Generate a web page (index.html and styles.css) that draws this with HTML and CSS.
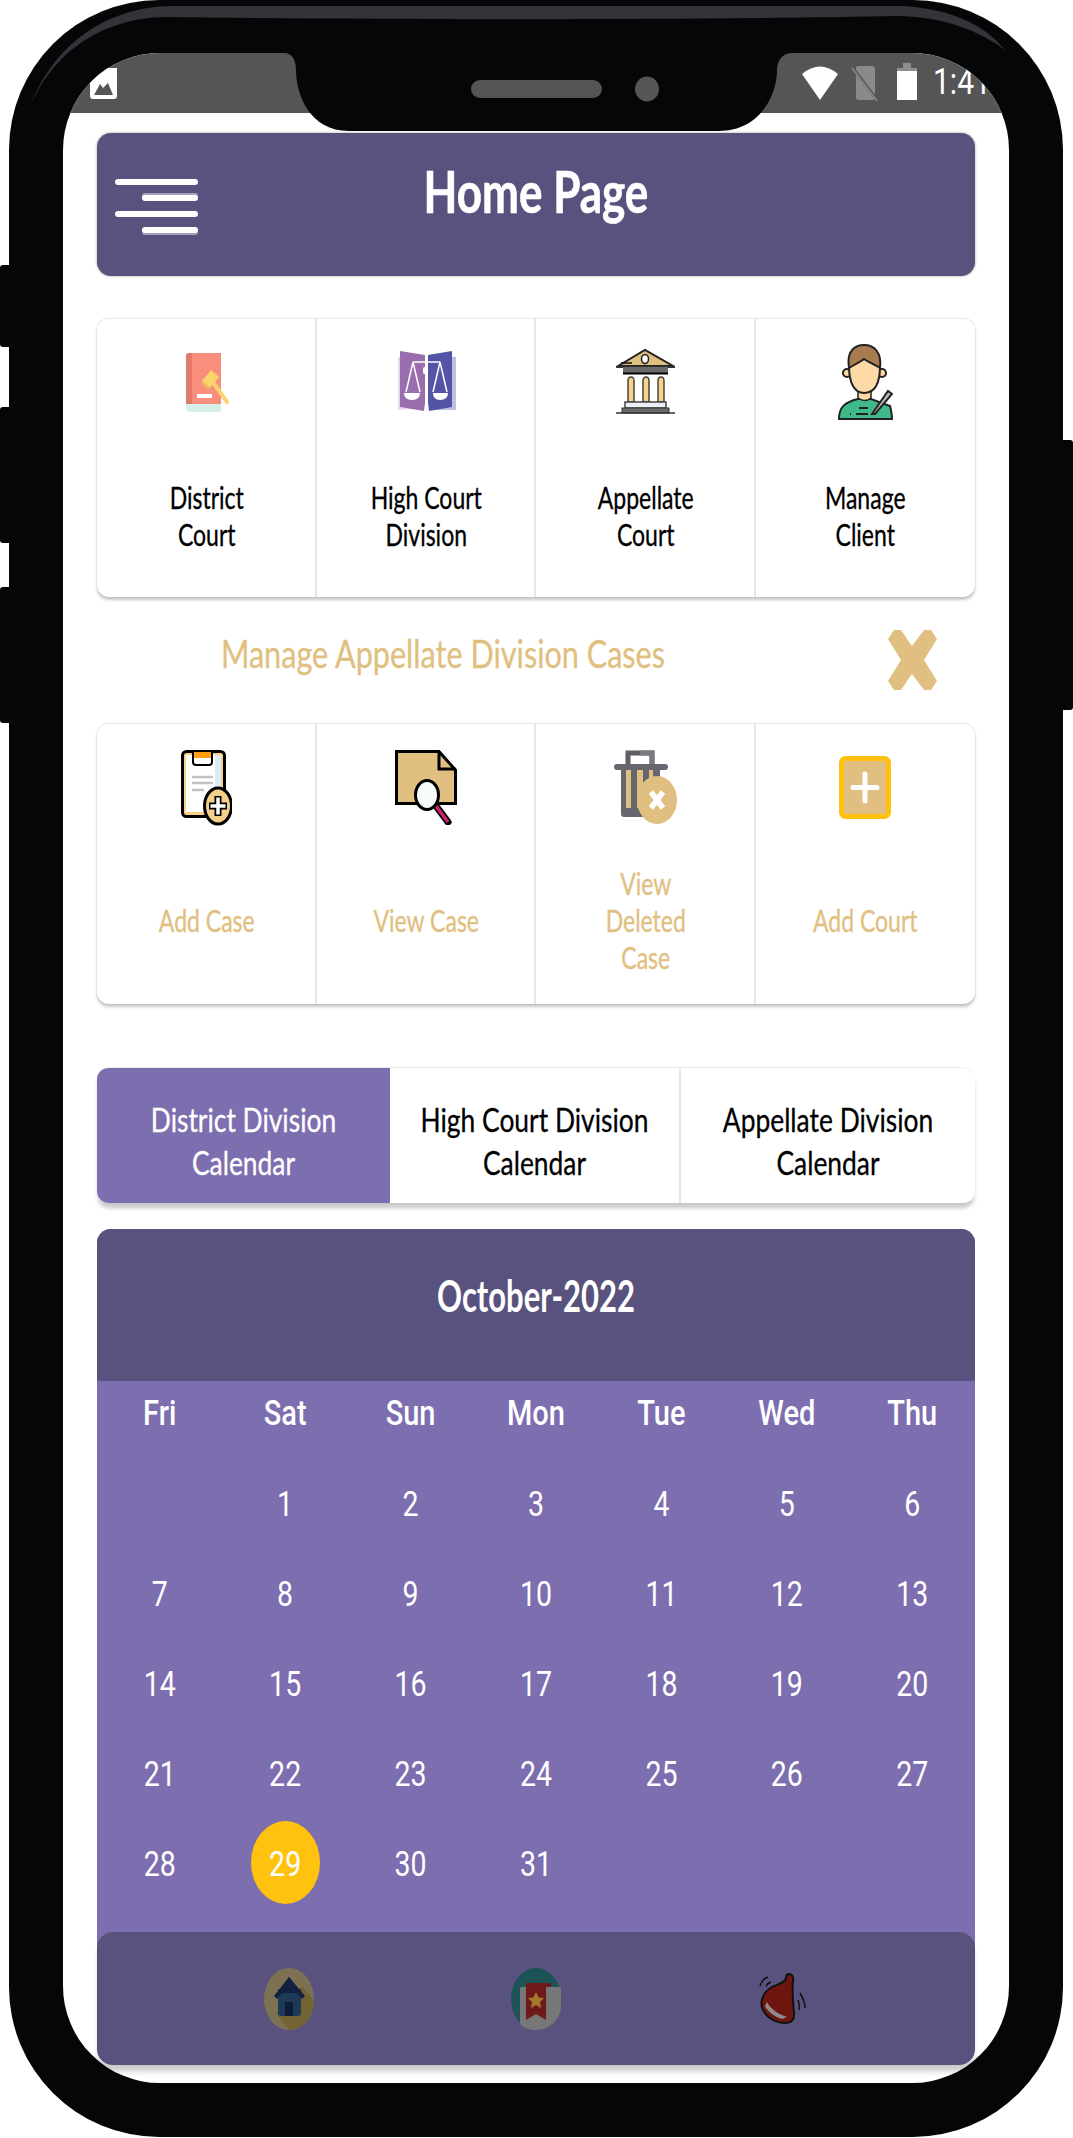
FILE: index.html
```html
<!DOCTYPE html>
<html lang="en">
<head>
<meta charset="utf-8">
<title>Home Page</title>
<link rel="stylesheet" href="styles.css">
</head>
<body>
<div class="side-keys left">
  <i class="key k1"></i><i class="key k2"></i><i class="key k3"></i>
</div>
<div class="phone">
  <svg class="sheen" viewBox="0 0 1054 120" aria-hidden="true"><path d="M20 110C41 55 91 18 156 17C391 20 691 20 891 16C941 17 976 35 996 50C976 25 941 8 891 6H161C91 8 41 50 20 110Z"/></svg>
  <svg class="notch" viewBox="280 50 520 90" aria-hidden="true">
    <path class="notch-body" d="M280 50H792V53C783 53 777 60 777 70C777 95 760 131 719 131H349C310 131 296 95 296 70C296 60 292 53 284 53Z"/>
    <rect class="notch-part" x="471" y="80" width="131" height="18" rx="9"/>
    <ellipse class="notch-part" cx="647" cy="89" rx="12" ry="12.5"/>
  </svg>
  <div class="screen">
    <div class="status">
      <svg class="st-img" viewBox="0 0 27 31"><path d="M0 0H27V28Q27 31 24 31H3Q0 31 0 28Z" fill="#fff"/><path d="M4 27L10 16L13 20L18 15L23 27Z" fill="#555"/></svg>
      <div class="st-right">
        <svg class="st-wifi" viewBox="0 0 36 35"><path d="M0 9Q18 -6 36 9L18 35Z" fill="#fff"/></svg>
        <svg class="st-sim" viewBox="0 0 28 36"><path d="M5 3Q5 1 7 1H21Q24 1 24 4V32Q24 35 21 35H8Q5 35 5 32Z" fill="#8a8a8a"/><path d="M1 2L26 35" stroke="#555" stroke-width="3"/><path d="M1 3L26 36" stroke="#8a8a8a" stroke-width="1.5"/></svg>
        <svg class="st-bat" viewBox="0 0 20 37"><path d="M6 0H14V5H20V12H0V5H6Z" fill="#8d8d8d"/><rect y="8" width="20" height="29" fill="#fff"/></svg>
        <span class="st-time">1:41</span>
      </div>
    </div>
    <main class="content">
      <header class="topbar">
        <div class="burger"><i></i><i class="short up"></i><i></i><i class="short down"></i></div>
        <h1 class="page-title"><span>Home Page</span></h1>
      </header>

      <section class="card grid4 first-card">
        <div class="cell">
          <svg class="ico ic-book" viewBox="0 0 44 59"><path d="M3 0H35V51H0V3Q0 0 3 0Z" fill="#f78f7c"/><path d="M3 0H6V51H0V3Q0 0 3 0Z" fill="#e07b6c"/><path d="M0 51H35V59H4Q0 59 0 55Z" fill="#d6efe9"/><rect x="11" y="41" width="15" height="4" fill="#fff"/><path d="M24 25L41 49" stroke="#fbd26e" stroke-width="4" stroke-linecap="round"/><path d="M16 28L25 17L33 24L24 35Z" fill="#f9d36c"/><path d="M16 28L24 35L22 37L15 30Z" fill="#f2b35e"/></svg>
          <div class="lbl"><span>District</span><span>Court</span></div>
        </div>
        <div class="cell">
          <svg class="ico ic-scale" viewBox="0 0 58 61"><path d="M0 7H4V58H20L0 60Z" fill="#e6d6ee"/><path d="M54 7H58V60H36V57H54Z" fill="#bcc2dc"/><path d="M2 1L27 5V53L26 61L2 57Z" fill="#9a6dae"/><path d="M54 1L30 5V53L31 61L54 57Z" fill="#5354a5"/><path d="M15 12H42M28 5V54M15 12L8 42M15 12L22 42M42 12L35 42M42 12L49 42" fill="none" stroke="#fff" stroke-width="1.5"/><path d="M6 43H22Q22 50 14 50Q6 50 6 43ZM35 43H50Q50 50 42 50Q35 50 35 43Z" fill="#fff"/><rect x="25" y="17" width="5" height="7" rx="2" fill="#fff"/></svg>
          <div class="lbl"><span>High Court</span><span>Division</span></div>
        </div>
        <div class="cell">
          <svg class="ico ic-court" viewBox="0 0 59 66"><path d="M2 18L29 2L57 18Z" fill="#e1bf80" stroke="#222" stroke-width="2"/><ellipse cx="29" cy="11" rx="3.5" ry="4.5" fill="#fff" stroke="#222" stroke-width="1.5"/><path d="M5 15H16" stroke="#111" stroke-width="1.5"/><path d="M0 19H59" stroke="#333" stroke-width="2"/><rect x="7" y="19" width="45" height="7" fill="#6a6a6a"/><path d="M7 25.500H52" stroke="#000" stroke-width="2"/><path d="M12 54V33Q12 29 15 29Q18 29 18 33V54ZM27 54V33Q27 29 30 29Q33 29 33 33V54ZM42 54V33Q42 29 45 29Q48 29 48 33V54Z" fill="#f9d187" stroke="#444" stroke-width="1.5"/><rect x="9" y="54" width="41" height="6" fill="#eef0f6" stroke="#444" stroke-width="1.500"/><rect x="6" y="60" width="47" height="5" fill="#6a6a6a" stroke="#333"/><path d="M0 65H59" stroke="#333" stroke-width="1.500"/></svg>
          <div class="lbl"><span>Appellate</span><span>Court</span></div>
        </div>
        <div class="cell">
          <svg class="ico ic-person" viewBox="0 0 55 76"><path d="M1 75C1 63 7 58 20 55H33L52 62C53 66 54 70 54 75Z" fill="#3fb98a" stroke="#222" stroke-width="2"/><path d="M20 46H33V54Q27 59 20 54Z" fill="#fdd9a6" stroke="#222" stroke-width="1.500"/><circle cx="9" cy="29" r="4" fill="#fdd9a6" stroke="#222" stroke-width="2"/><circle cx="44" cy="29" r="4" fill="#fdd9a6" stroke="#222" stroke-width="2"/><path d="M11 22C11 40 17 49 26 49C36 49 42 40 42 22C36 20 30 18 26 14C22 18 16 20 11 22Z" fill="#fdd9a6" stroke="#222" stroke-width="2"/><path d="M11 24C8 6 18 1 26 1C36 1 44 8 42 24C36 20 30 18 26 15C22 18 16 21 11 24Z" fill="#a97c50" stroke="#222" stroke-width="2"/><path d="M34 70L50 47L54 50L37 70Z" fill="#bbb" stroke="#222" stroke-width="2"/><path d="M21 64H30M12 70H13M18 70H30" stroke="#222" stroke-width="2"/></svg>
          <div class="lbl"><span>Manage</span><span>Client</span></div>
        </div>
      </section>

      <div class="manage-row">
        <h2 class="manage-title"><span>Manage Appellate Division Cases</span></h2>
        <svg class="close-x" viewBox="0 0 51 62" aria-label="Close"><path d="M7 1L14 1L25 17L37 1L44 1L50 10L37 31L50 52L44 61L37 61L25 45L14 61L7 61L1 52L14 31L1 10Z" fill="#e1bf80"/></svg>
      </div>

      <section class="card grid4 second-card">
        <div class="cell gold">
          <svg class="ico ic-clip" viewBox="0 0 51 76"><rect x="1.500" y="1.500" width="42" height="65" rx="4" fill="#f7cf85" stroke="#000" stroke-width="3"/><rect x="5" y="5" width="35" height="57" fill="#fff"/><rect x="34" y="5" width="6" height="57" fill="#d9eef2"/><path d="M12 1H31V12Q31 15 28 15H15Q12 15 12 12Z" fill="#fff" stroke="#000" stroke-width="2"/><rect x="13" y="2" width="17" height="6" fill="#ff9d0a"/><path d="M11 27H32M11 33H32M11 40H23" stroke="#c2c2c2" stroke-width="2.500"/><ellipse cx="37" cy="56" rx="13.500" ry="18" fill="#f5d088" stroke="#000" stroke-width="3"/><path d="M37 46V66M28 56H46" stroke="#000" stroke-width="7"/><path d="M37 47.500V64.500M29.500 56H44.500" stroke="#fff" stroke-width="3.500"/></svg>
          <div class="lbl"><span>Add Case</span></div>
        </div>
        <div class="cell gold">
          <svg class="ico ic-file" viewBox="0 0 62 75"><path d="M1.500 1.500H44L60.500 20V53.500H1.500Z" fill="#e1bf80" stroke="#000" stroke-width="3"/><path d="M44 1.500V19H60.500" fill="none" stroke="#000" stroke-width="3"/><path d="M41 56L53 72" stroke="#000" stroke-width="7" stroke-linecap="round"/><path d="M41 56L53 72" stroke="#c9256d" stroke-width="3.500"/><ellipse cx="32" cy="45" rx="11.500" ry="14.500" fill="#f8fbfb" stroke="#000" stroke-width="3"/></svg>
          <div class="lbl"><span>View Case</span></div>
        </div>
        <div class="cell gold">
          <svg class="ico ic-trash" viewBox="0 0 63 76"><path d="M14 16V3H38V16" fill="none" stroke="#5f5f67" stroke-width="5"/><path d="M26 3H38V16" fill="none" stroke="#7a7a82" stroke-width="5"/><rect x="7" y="18" width="39" height="49" rx="3" fill="#66666e"/><path d="M12 20H17V58H12ZM23 20H29V58H23ZM35 20H39V58H35Z" fill="#e1bf80"/><path d="M3 17H51" stroke="#66666e" stroke-width="6" stroke-linecap="round"/><ellipse cx="43" cy="50" rx="20" ry="24" fill="#e1bf80"/><path d="M37 42L49 58M49 42L37 58" stroke="#fff" stroke-width="5.500"/></svg>
          <div class="lbl"><span>View</span><span>Deleted</span><span>Case</span></div>
        </div>
        <div class="cell gold">
          <svg class="ico ic-add" viewBox="0 0 52 63"><rect x="2.500" y="2.500" width="47" height="58" rx="4" fill="#e1bf80" stroke="#ffc10e" stroke-width="5"/><path d="M26 18V45M14 31.500H38" stroke="#fff" stroke-width="5" stroke-linecap="round"/></svg>
          <div class="lbl"><span>Add Court</span></div>
        </div>
      </section>

      <nav class="card tabs">
        <a class="tab active"><span>District Division</span><span>Calendar</span></a>
        <a class="tab"><span>High Court Division</span><span>Calendar</span></a>
        <a class="tab"><span>Appellate Division</span><span>Calendar</span></a>
      </nav>

      <section class="calendar">
        <h3 class="month"><span>October-2022</span></h3>
        <div class="weekdays">
          <b><span>Fri</span></b><b><span>Sat</span></b><b><span>Sun</span></b><b><span>Mon</span></b><b><span>Tue</span></b><b><span>Wed</span></b><b><span>Thu</span></b>
        </div>
        <div class="days">
          <i></i><i><span>1</span></i><i><span>2</span></i><i><span>3</span></i><i><span>4</span></i><i><span>5</span></i><i><span>6</span></i>
          <i><span>7</span></i><i><span>8</span></i><i><span>9</span></i><i><span>10</span></i><i><span>11</span></i><i><span>12</span></i><i><span>13</span></i>
          <i><span>14</span></i><i><span>15</span></i><i><span>16</span></i><i><span>17</span></i><i><span>18</span></i><i><span>19</span></i><i><span>20</span></i>
          <i><span>21</span></i><i><span>22</span></i><i><span>23</span></i><i><span>24</span></i><i><span>25</span></i><i><span>26</span></i><i><span>27</span></i>
          <i><span>28</span></i><i class="today"><span>29</span></i><i><span>30</span></i><i><span>31</span></i>
        </div>
      </section>

      <footer class="bottom-nav">
        <svg class="nav-ico" viewBox="0 0 50 62"><ellipse cx="25" cy="31" rx="25" ry="31" fill="#7c7152"/><path d="M25 62C40 62 50 48 50 33L38 18L12 45Z" fill="#726433"/><path d="M14 21H37V45Q37 48 34 48H17Q14 48 14 45Z" fill="#1d3a56"/><path d="M25 9L41 28L38 31L25 17L13 31L10 28Z" fill="#14203f"/><path d="M25 9L36 25H14Z" fill="#14203f"/><rect x="21" y="34" width="8" height="14" fill="#0f1b38"/></svg>
        <svg class="nav-ico" viewBox="0 0 50 62"><ellipse cx="25" cy="31" rx="25" ry="31" fill="#1d5257"/><path d="M9 21Q9 19 11 19H50V38C50 50 40 62 25 62C18 62 13 60 9 56Z" fill="#777"/><path d="M15 15Q15 15 19 15H40V19H35V52L25 46L15 52Z" fill="#6f1a1a"/><path d="M25 24L27.500 29.500L33 30L29 34L30 40L25 37L20 40L21 34L17 30L22.500 29.500Z" fill="#a47a2a"/></svg>
        <svg class="nav-ico" viewBox="0 0 50 62"><path d="M31 6C34 6 36 9 35 13C34 20 35 34 36 45C37 52 33 55 27 55C18 55 9 50 5 42C1 34 5 24 14 19C20 16 27 15 28 10C28 8 29 6 31 6Z" fill="#6d1610" stroke="#111" stroke-width="2"/><path d="M9 34C12 41 22 47 29 49L24 51C17 49 10 44 7 38Z" fill="#8d8d8d"/><path d="M2 18Q4 11 10 9M8 18Q10 15 13 14M42 25Q47 33 47 40M40 32Q42 37 41 42" fill="none" stroke="#111" stroke-width="1.500"/></svg>
      </footer>
    </main>
  </div>
</div>
<div class="side-keys right"><i class="key k4"></i></div>
</body>
</html>
```
FILE: styles.css
```css
* { box-sizing: border-box; }
html, body { margin: 0; padding: 0; background: #fff; }
body {
  position: relative;
  width: 1073px;
  height: 2138px;
  overflow: hidden;
  padding-left: 9px;
  font-family: "Lato", "Liberation Sans", sans-serif;
}
.side-keys { position: absolute; top: 0; width: 9px; }
.side-keys.left { left: 0; }
.side-keys.right { left: 1063px; }
.key { position: absolute; left: 0; width: 10px; background: #050608; }
.k1 { top: 265px; height: 82px; border-radius: 3px 0 0 3px; }
.k2 { top: 407px; height: 136px; border-radius: 3px 0 0 3px; }
.k3 { top: 587px; height: 136px; border-radius: 3px 0 0 3px; }
.k4 { top: 440px; height: 270px; border-radius: 0 3px 3px 0; }

.phone {
  position: relative;
  width: 1054px;
  height: 2137px;
  padding: 53px 54px 54px;
  background: #050608;
  border-radius: 150px;
}
.sheen { position: absolute; left: 0; top: 0; width: 1054px; height: 120px; z-index: 3; fill: #333437; }
.notch { position: absolute; left: 271px; top: 50px; width: 520px; height: 90px; z-index: 4; }
.notch-body { fill: #050608; }
.notch-part { fill: #555; }

.screen {
  width: 946px;
  height: 2030px;
  background: #fff;
  border-radius: 97px;
  overflow: hidden;
}

.status {
  display: flex;
  justify-content: space-between;
  height: 60px;
  background: #555;
}
.st-img { width: 27px; height: 31px; margin: 15px 0 0 27px; }
.st-right { display: flex; width: 207px; flex: none; padding-top: 10px; }
.st-wifi { width: 36px; height: 35px; margin: 2px 0 0 0; }
.st-sim { width: 28px; height: 36px; margin: 2px 0 0 13px; }
.st-bat { width: 20px; height: 37px; margin: 0 0 0 18px; }
.st-time {
  display: block;
  margin: 2px 0 0 16px;
  color: #fff;
  font: 400 30px/35px "Roboto", sans-serif;
  transform: scaleY(1.2);
}

.content { padding: 20px 34px 0; }

.topbar {
  display: grid;
  grid-template-columns: 1fr auto 1fr;
  height: 143px;
  background: #59527e;
  border-radius: 14px;
  box-shadow: 0 0 3px rgba(0, 0, 0, .35);
}
.burger { display: flex; flex-direction: column; align-items: flex-start; gap: 10px; padding: 46px 0 0 18px; width: 101px; }
.burger i { display: block; width: 83px; height: 6px; background: #fff; border-radius: 3px; }
.burger i.short { width: 56px; margin-left: 27px; }
.burger i.up { box-shadow: 0 -2px 0 #a5a1b8; }
.burger i.down { box-shadow: 0 2px 0 #a5a1b8; }
.page-title { margin: 0; padding-top: 33px; color: #fff; font-size: 44px; font-weight: 700; line-height: 50px; -webkit-text-stroke: .5px #fff; }
.page-title span { display: block; transform: scaleY(1.3); }

.card {
  background: #fff;
  border-radius: 12px;
  border-top: 1px solid #ececec;
  box-shadow: 0 3px 3px rgba(0, 0, 0, .22), 0 0 1px rgba(0, 0, 0, .2);
}
.grid4 { display: grid; grid-template-columns: repeat(4, 1fr); }
.first-card { height: 279px; margin-top: 42px; }
.second-card { height: 281px; }

.cell {
  position: relative;
  display: flex;
  flex-direction: column;
  align-items: center;
  border-right: 2px solid #e6e6e6;
  color: #000;
}
.cell:last-child { border-right: 0; }
.gold { color: #e1bf80; }
.ico { display: block; flex: none; }
.ic-book { width: 44px; height: 59px; margin: 34px 0 0 4px; }
.ic-scale { width: 58px; height: 61px; margin: 31px 0 0 3px; }
.ic-court { width: 59px; height: 66px; margin: 29px 0 0 2px; }
.ic-person { width: 55px; height: 76px; margin: 25px 0 0 0; }
.ic-clip { width: 51px; height: 76px; margin: 26px 0 0 2px; }
.ic-file { width: 62px; height: 75px; margin: 26px 0 0 2px; }
.ic-trash { width: 63px; height: 76px; margin: 26px 0 0 2px; }
.ic-add { width: 52px; height: 63px; margin: 32px 0 0 0; }

.lbl { position: absolute; left: 2px; right: 0; font-size: 23px; text-align: center; -webkit-text-stroke: .25px currentColor; }
.cell:last-child .lbl { left: 0; }
.lbl span { display: block; height: 37px; line-height: 37px; transform: scaleY(1.37); }
.first-card .lbl { top: 160px; }
.second-card .lbl { top: 0; bottom: 0; display: flex; flex-direction: column; justify-content: center; padding-top: 112px; }

.manage-row {
  display: grid;
  grid-template-columns: 1fr 51px;
  align-items: center;
  height: 126px;
  padding: 0 37px 0 0;
}
.manage-title { margin: 0 0 14px; color: #e1bf80; font-size: 30.600px; font-weight: 400; text-align: center; padding-right: 98px; -webkit-text-stroke: .25px currentColor; }
.manage-title span { display: block; transform: scaleY(1.25); }
.close-x { width: 51px; height: 62px; margin-top: -1px; }

.tabs { display: grid; grid-template-columns: 293px 291px 1fr; height: 136px; margin-top: 63px; overflow: hidden; box-shadow: 0 6px 4px -1px rgba(0, 0, 0, .22); }
.tab { display: block; padding-top: 31px; border-right: 2px solid #e6e6e6; color: #000; font-size: 26.400px; text-align: center; -webkit-text-stroke: .25px currentColor; }
.tab:last-child { border-right: 0; }
.tab span { display: block; height: 43px; line-height: 43px; transform: scaleY(1.25); }
.tab.active { background: #7d6eb0; color: #fff; border-right: 0; }

.calendar {
  height: 717px;
  margin-top: 26px;
  background: #7d6eb0;
  border-radius: 14px 14px 0 0;
  overflow: hidden;
  color: #fff;
}
.month {
  height: 152px;
  margin: 0;
  padding-top: 47px;
  background: #59527e;
  font-size: 31px;
  font-weight: 700;
  line-height: 38px;
  text-align: center;
}
.month span { display: block; transform: scaleY(1.4); }
.weekdays, .days { display: grid; grid-template-columns: repeat(7, 1fr); text-align: center; font-family: "Roboto", sans-serif; }
.weekdays { height: 64px; margin-bottom: 14px; font-size: 29px; line-height: 64px; }
.weekdays b { font-weight: 500; }
.weekdays span { display: inline-block; transform: scaleY(1.2); }
.days { grid-auto-rows: 90px; font-size: 28.500px; }
.days i { display: flex; align-items: center; justify-content: center; font-style: normal; }
.days span { display: block; transform: scaleY(1.23); }
.days i.today { position: relative; }
.days i.today::before {
  content: "";
  position: absolute;
  left: 50%;
  top: 2px;
  width: 69px;
  height: 83px;
  margin-left: -34.500px;
  background: #ffc30f;
  border-radius: 50%;
}
.days i.today span { position: relative; }

.bottom-nav {
  position: relative;
  display: flex;
  justify-content: center;
  align-items: center;
  gap: 197px;
  height: 133px;
  margin-top: -14px;
  background: #59527e;
  border-radius: 16px;
  box-shadow: 0 8px 6px -2px rgba(0, 0, 0, .22);
}
.nav-ico { width: 50px; height: 62px; display: block; }
```
